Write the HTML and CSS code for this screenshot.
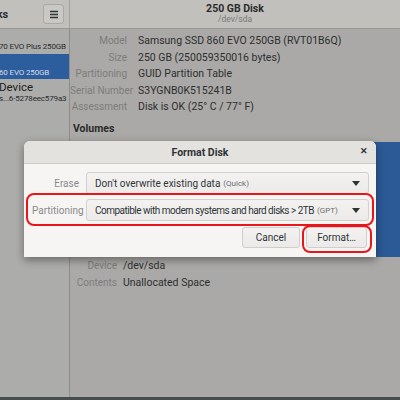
FILE: index.html
```html
<!DOCTYPE html>
<html lang="en">
<head>
  <meta charset="UTF-8" />
  <title>Disks – Format Disk</title>
  <link rel="stylesheet" href="styles.css">
</head>
<body>
  <div class="window">
    <header class="titlebar">
      <div class="titlebar-side">
        <span class="app-title">Disks</span>
        <button class="menu-btn">
          <svg width="10" height="9" viewBox="0 0 10 9"><path d="M1 1.5h8M1 4.5h8M1 7.5h8" stroke="#2e3436" stroke-width="1.4"/></svg>
        </button>
      </div>
      <div class="titlebar-main">
        <div class="disk-title">250 GB Disk</div>
        <div class="disk-sub">/dev/sda</div>
      </div>
    </header>

    <div class="panes">
      <aside class="sidebar">
        <div class="drive">
          <div class="drive-model">70 EVO Plus 250GB</div>
        </div>
        <div class="drive selected">
          <div class="drive-name">&nbsp;</div>
          <div class="drive-model">60 EVO 250GB</div>
        </div>
        <div class="drive">
          <div class="drive-name big">Device</div>
          <div class="drive-model">s...6-5278eec579a3</div>
        </div>
      </aside>

      <main class="content">
        <dl class="props">
          <dt>Model</dt><dd>Samsung SSD 860 EVO 250GB (RVT01B6Q)</dd>
          <dt>Size</dt><dd>250 GB (250059350016 bytes)</dd>
          <dt>Partitioning</dt><dd>GUID Partition Table</dd>
          <dt>Serial Number</dt><dd>S3YGNB0K515241B</dd>
          <dt>Assessment</dt><dd>Disk is OK (25° C / 77° F)</dd>
        </dl>
        <h2 class="section">Volumes</h2>
        <div class="volume-map">
          <div class="volume"></div>
        </div>
        <dl class="props props-vol">
          <dt>Device</dt><dd>/dev/sda</dd>
          <dt>Contents</dt><dd>Unallocated Space</dd>
        </dl>
      </main>
    </div>
    <div class="dock"></div>

    <!-- modal dialog -->
    <div class="dialog">
      <div class="dialog-head">
        <span>Format Disk</span>
        <span class="close">&#x2715;</span>
      </div>
      <div class="dialog-body">
        <div class="field">
          <label>Erase</label>
          <div class="combo">Don't overwrite existing data <small>(Quick)</small><span class="arrow"></span></div>
        </div>
        <div class="field">
          <label>Partitioning</label>
          <div class="combo combo-long">Compatible with modern systems and hard disks &gt; 2TB <small>(GPT)</small><span class="arrow"></span></div>
        </div>
        <div class="actions">
          <button class="btn">Cancel</button>
          <button class="btn">Format…</button>
        </div>
      </div>
      <div class="mark mark-part"></div>
      <div class="mark mark-format"></div>
    </div>
  </div>
</body>
</html>
```

FILE: styles.css
```css
* {
  margin: 0;
  padding: 0;
  box-sizing: border-box;
}

body {
  width: 400px;
  height: 400px;
  overflow: hidden;
  font-family: Roboto, "Noto Sans", sans-serif;
  background: #aaa9a7;
  color: #2b2b2b;
}

.window {
  position: relative;
  width: 400px;
  height: 400px;
  display: flex;
  flex-direction: column;
}

/* header bar */
.titlebar {
  height: 29px;
  display: flex;
  background: #c1c0bd;
  border-bottom: 1px solid #999896;
}

.titlebar-side {
  width: 70px;
  display: flex;
  align-items: center;
  justify-content: space-between;
  padding-right: 5px;
  border-right: 1px solid #a2a19f;
  overflow: hidden;
}

.app-title {
  font-size: 11px;
  font-weight: 700;
  margin-left: -19px;
  color: #2c2c2c;
}

.menu-btn {
  width: 21px;
  height: 20px;
  border: 1px solid #a9a8a5;
  border-radius: 3px;
  background: #c9c8c5;
  display: flex;
  align-items: center;
  justify-content: center;
}

.titlebar-main {
  flex: 1;
  display: flex;
  flex-direction: column;
  align-items: center;
  justify-content: center;
  line-height: 1.15;
}

.disk-title {
  font-size: 10.5px;
  font-weight: 700;
  color: #2c2c2c;
}

.disk-sub {
  font-size: 8.5px;
  color: #7b7a78;
}

.panes {
  flex: 1;
  display: flex;
}

/* device list */
.sidebar {
  width: 70px;
  background: #acacab;
  border-right: 1px solid #8e8e8d;
  overflow: hidden;
  padding-top: 12px;
}

.drive {
  white-space: nowrap;
  margin-left: -1px;
}

.drive:first-child {
  height: 13px;
}

.drive.selected {
  height: 25px;
  background: #2c5d9c;
  color: #d4dcea;
  margin-left: 0;
  padding-top: 2px;
  margin-bottom: 2px;
}

.drive-name {
  font-size: 11px;
  line-height: 11px;
}

.drive-name.big {
  font-size: 11.5px;
  line-height: 12px;
  color: #222;
}

.drive-model {
  font-size: 8px;
  letter-spacing: -0.15px;
  line-height: 11px;
}

.selected .drive-model {
  margin-left: -1px;
}

/* disk properties */
.content {
  flex: 1;
  padding-top: 5px;
}

.props {
  display: grid;
  grid-template-columns: 57px auto;
  column-gap: 11px;
  row-gap: 3px;
  font-size: 10.5px;
  line-height: 13.6px;
}

.props dt {
  text-align: right;
  color: #7d7c7b;
  white-space: nowrap;
  font-size: 10px;
}

.props dd {
  color: #2e2e2e;
  white-space: nowrap;
}

.section {
  font-size: 10.5px;
  font-weight: 700;
  margin: 8px 0 0 3px;
  color: #2b2b2b;
}

.volume-map {
  margin: 7px 0 0 3px;
  height: 115px;
}

.volume {
  height: 100%;
  background: #2c5a96;
}

.props-vol {
  margin-top: 2px;
  grid-template-columns: 47px auto;
  column-gap: 6px;
}

.dock {
  height: 3px;
  background: #454d4f;
}

/* format dialog */
.dialog {
  position: absolute;
  left: 24px;
  top: 141px;
  width: 352px;
  height: 116px;
  background: #f6f5f4;
  border-radius: 6px 6px 0 0;
  box-shadow: 0 3px 9px rgba(0, 0, 0, 0.4);
  display: flex;
  flex-direction: column;
}

.dialog-head {
  height: 23px;
  background: #e4e2df;
  border-bottom: 1px solid #cfcdca;
  border-radius: 6px 6px 0 0;
  display: flex;
  align-items: center;
  justify-content: center;
  position: relative;
  font-size: 10.5px;
  font-weight: 700;
  color: #2e3436;
}

.close {
  position: absolute;
  right: 8px;
  top: 5px;
  font-size: 9px;
  font-weight: 700;
}

.dialog-body {
  padding: 8px 7px 0 8px;
  display: flex;
  flex-direction: column;
  gap: 5px;
}

.field {
  display: flex;
  align-items: center;
  gap: 7px;
}

.field label {
  width: 47px;
  text-align: right;
  font-size: 10px;
  color: #8a8a88;
  white-space: nowrap;
}

.combo {
  flex: 1;
  position: relative;
  height: 22px;
  display: flex;
  align-items: center;
  padding-left: 8px;
  border: 1px solid #d3d1ce;
  border-radius: 3px;
  background: linear-gradient(#f3f2f1, #ecebea);
  font-size: 10px;
  color: #2e3436;
  white-space: nowrap;
}

.combo-long {
  letter-spacing: -0.5px;
}

.combo small {
  font-size: 8px;
  letter-spacing: 0;
  color: #6d6e6d;
  margin-left: 3px;
}

.arrow {
  position: absolute;
  right: 8px;
  top: 8px;
  border-left: 4px solid transparent;
  border-right: 4px solid transparent;
  border-top: 5px solid #2e3436;
}

.actions {
  display: flex;
  justify-content: flex-end;
  gap: 6px;
  margin-top: 1px;
}

.btn {
  height: 21px;
  width: 58px;
  font-family: inherit;
  font-size: 10px;
  color: #2e3436;
  border: 1px solid #d0cecb;
  border-radius: 3px;
  background: linear-gradient(#f3f2f1, #ebeae8);
}

.btn:last-child {
  width: 61px;
  margin-right: 2px;
}

/* red highlight marks */
.mark {
  position: absolute;
  border: 2px solid #e8161b;
  border-radius: 8px;
}

.mark-part {
  left: 2px;
  top: 52px;
  width: 348px;
  height: 33px;
}

.mark-format {
  left: 278px;
  top: 84px;
  width: 70px;
  height: 28px;
}
```
